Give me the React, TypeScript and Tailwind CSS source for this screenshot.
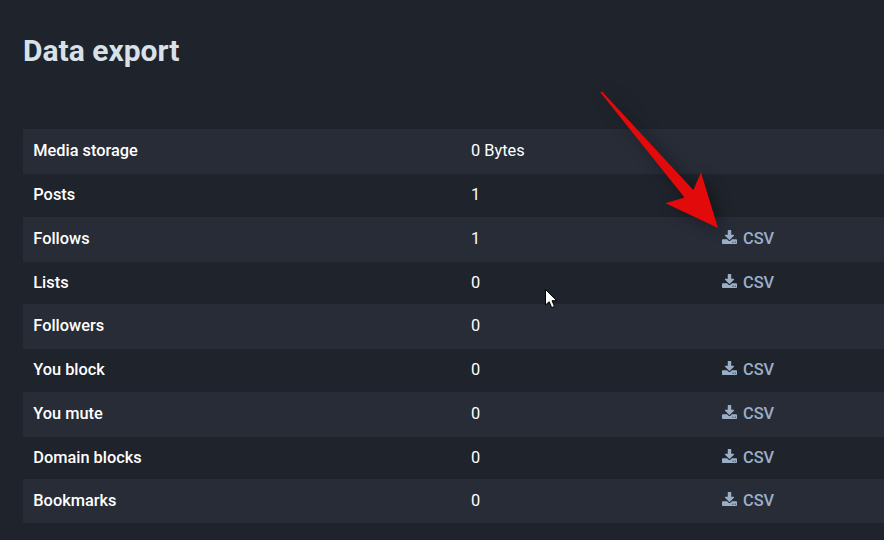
const rows = [
  { label: "Media storage", value: "0 Bytes", csv: false, height: "h-[45px] pb-px" },
  { label: "Posts", value: "1", csv: false, height: "h-[43px] pb-px" },
  { label: "Follows", value: "1", csv: true, height: "h-[45px] pb-px" },
  { label: "Lists", value: "0", csv: true, height: "h-[42px]" },
  { label: "Followers", value: "0", csv: false, height: "h-[45px] pb-px" },
  { label: "You block", value: "0", csv: true, height: "h-[43px] pb-px" },
  { label: "You mute", value: "0", csv: true, height: "h-[45px] pb-px" },
  { label: "Domain blocks", value: "0", csv: true, height: "h-[42px]" },
  { label: "Bookmarks", value: "0", csv: true, height: "h-[44px]" },
];

function DownloadIcon() {
  return (
    <svg viewBox="0 0 1664 1536" className="w-[15px] h-[14px] mb-1" fill="currentColor">
      <path d="M1280 1344q0-26-19-45t-45-19-45 19-19 45 19 45 45 19 45-19 19-45zm256 0q0-26-19-45t-45-19-45 19-19 45 19 45 45 19 45-19 19-45zm128-224v320q0 40-28 68t-68 28h-1472q-40 0-68-28t-28-68v-320q0-40 28-68t68-28h465l135 136q58 56 136 56t136-56l136-136h464q40 0 68 28t28 68zm-325-569q17 41-14 70l-448 448q-18 19-45 19t-45-19l-448-448q-31-29-14-70 17-39 59-39h256v-448q0-26 19-45t45-19h256q26 0 45 19t19 45v448h256q42 0 59 39z" />
    </svg>
  );
}

export default function App() {
  return (
    <div className="relative h-[540px] w-[884px] overflow-hidden bg-[#1f232b] pl-[23px] pt-[31px] font-[Roboto,sans-serif]">
      <h1 className="h-[98px] text-[30px] leading-[40px] font-bold text-[#d9e1e8]">Data export</h1>

      <div className="text-[16.35px] leading-5 text-white">
        {rows.map((row) => (
          <div
            key={row.label}
            className={`grid grid-cols-[437.7px_251px_1fr] items-center pl-[10.3px] odd:bg-[#282c37] ${row.height}`}
          >
            <span className="font-medium">{row.label}</span>
            <span>{row.value}</span>
            {row.csv && (
              <a href="#" className="flex items-center gap-[6px] font-medium text-[#9baec8]">
                <DownloadIcon />
                CSV
              </a>
            )}
          </div>
        ))}
      </div>

      {/* Pointer arrow aimed at the Follows download link */}
      <svg
        className="absolute left-[580px] top-[80px] drop-shadow-[4px_2px_8px_rgba(0,0,0,0.4)]"
        width="170"
        height="170"
        viewBox="580 80 170 170"
      >
        <path d="M600.5 92.5L602 91.5L693.3 190L701 172.5L718 228L665.5 203.3L684.5 197.5Z" fill="#e20a0a" />
      </svg>

      <svg className="absolute left-[545px] top-[289px]" width="13" height="20" viewBox="0 0 13 20">
        <path d="M.5 .5V16L4.2 12.7L6.7 18.6L9.5 17.4L7 11.7H11.8Z" fill="#fff" stroke="#000" strokeWidth="1" />
      </svg>
    </div>
  );
}
